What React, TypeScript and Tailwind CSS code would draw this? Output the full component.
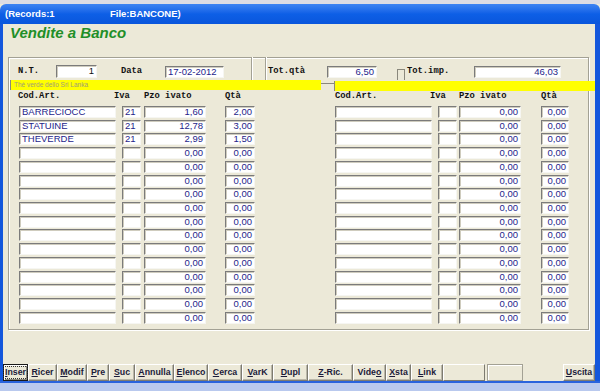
import React from 'react';

type Row = { cod: string; iva: string; pzo: string; qta: string };

const leftRows: Row[] = [
  { cod: 'BARRECIOCC', iva: '21', pzo: '1,60', qta: '2,00' },
  { cod: 'STATUINE', iva: '21', pzo: '12,78', qta: '3,00' },
  { cod: 'THEVERDE', iva: '21', pzo: '2,99', qta: '1,50' },
  ...Array.from({ length: 13 }, () => ({ cod: '', iva: '', pzo: '0,00', qta: '0,00' })),
];
const rightRows: Row[] = Array.from({ length: 16 }, () => ({ cod: '', iva: '', pzo: '0,00', qta: '0,00' }));

// sunken edit box, classic windows look
const sunken =
  'bg-white border-t border-l border-r border-b border-t-[#7b7b7b] border-l-[#7b7b7b] border-r-[#f6f6f2] border-b-[#f6f6f2] shadow-[inset_1px_1px_0_#cfccbe]';

function Field({ cls, value, right }: { cls: string; value: string; right?: boolean }) {
  return (
    <div
      className={`${sunken} ${cls} h-[12px] shrink-0 text-[9.5px] leading-[10px] text-[#24248a] font-['Liberation_Sans',Arial,sans-serif] overflow-hidden whitespace-nowrap ${
        right ? 'text-right pr-[2px]' : 'pl-[2px]'
      }`}
    >
      {value}
    </div>
  );
}

function Btn({ label, u, cls, focused }: { label: string; u: number; cls: string; focused?: boolean }) {
  return (
    <div
      className={`${cls} h-[17px] shrink-0 bg-[#ece9d8] flex items-center justify-center text-[8.8px] font-bold text-[#1b1b3a] font-['Liberation_Sans',Arial,sans-serif] ${
        focused
          ? 'border border-[#1a1a1a] shadow-[inset_1px_1px_0_#fff,inset_-1px_-1px_0_#8a887c]'
          : 'border-t border-l border-t-white border-l-white border-r border-b border-r-[#7d7b70] border-b-[#7d7b70] shadow-[inset_-1px_-1px_0_#b9b6a8]'
      }`}
    >
      <span className={focused ? 'outline outline-1 outline-dotted outline-[#333] px-[1px] leading-[11px]' : 'leading-[11px]'}>
        {label.slice(0, u)}
        <span className="underline">{label.charAt(u)}</span>
        {label.slice(u + 1)}
      </span>
    </div>
  );
}

const lbl = "h-[13px] leading-[13px] shrink-0 text-[8.8px] font-bold text-[#111] font-['Liberation_Mono',monospace]";

export default function App() {
  return (
    <div className="w-[600px] h-[391px] overflow-hidden flex flex-col bg-[#ece9d8] font-['Liberation_Sans',Arial,sans-serif]">
      <div className="h-[4px] bg-[#dcdce4]" />
      <div className="h-[20px] rounded-t-[6px] bg-gradient-to-b from-[#3d83f2] via-[#0d5fe6] to-[#0a56dc] flex items-center text-white text-[9.5px] font-bold">
        <span className="ml-[5px] w-[105px]">(Records:1</span>
        <span>File:BANCONE)</span>
      </div>

      <div className="flex h-[357px]">
        <div className="w-[3px] bg-[#1457dc]" />
        <div className="w-[592px] flex flex-col">
          <div className="h-[17px] pl-[7px] text-[15px] leading-[17px] font-bold italic text-[#1f8f28]">Vendite a Banco</div>

          {/* group box */}
          <div className="mt-[16px] ml-[5px] w-[581px] h-[273px] border border-[#a3a194] shadow-[inset_1px_1px_0_#fff,1px_1px_0_#fff] flex flex-col">
            <div className="h-[22px] flex items-end pb-[2px]">
              <div className={`${lbl} ml-[9px] w-[38px]`}>N.T.</div>
              <Field cls="w-[41px] h-[13px] !text-[#111]" value="1" right />
              <div className={`${lbl} ml-[24px] w-[44px]`}>Data</div>
              <Field cls="w-[59px]" value="17-02-2012" />
              <div className="ml-[27px] w-[2px] shrink-0 self-stretch -mt-[1px] -mb-[2px] border-l border-l-[#a3a194] border-r border-r-white" />
              <div className="ml-[12px] w-[2px] shrink-0 self-stretch -mt-[1px] -mb-[2px] border-l border-l-[#a3a194] border-r border-r-white" />
              <div className={`${lbl} ml-[1px] w-[59px]`}>Tot.qtà</div>
              <Field cls="w-[50px]" value="6,50" right />
              <div className="ml-[20px] w-[8px] h-[11px] -mb-[2px] shrink-0 border-t border-l border-r border-[#8a887c]" />
              <div className={`${lbl} ml-[2px] w-[67px]`}>Tot.imp.</div>
              <Field cls="w-[87px]" value="46,03" right />
            </div>

            <div className="h-[10px] flex">
              <div className="ml-[1px] w-[311px] h-[10px] shrink-0 bg-[#ffff00] border-l border-[#8a887c] pl-[3px] text-[6.5px] leading-[10px] text-[#a09c78]">
                Thè verde dello Sri Lanka
              </div>
              <div className="w-[13px] h-px mt-[3px] shrink-0 bg-[#8a887c]" />
              <div className="w-[262px] h-[10px] mt-[1px] bg-[#ffff00] border-l border-[#8a887c] shrink-0" />
            </div>

            <div className="h-[13px] flex items-center">
              <div className={`${lbl} ml-[9px] w-[96px]`}>Cod.Art.</div>
              <div className={`${lbl} w-[30px]`}>Iva</div>
              <div className={`${lbl} w-[81px]`}>Pzo ivato</div>
              <div className={`${lbl} w-[110px]`}>Qtà</div>
              <div className={`${lbl} w-[95px]`}>Cod.Art.</div>
              <div className={`${lbl} w-[29px]`}>Iva</div>
              <div className={`${lbl} w-[82px]`}>Pzo ivato</div>
              <div className={`${lbl} w-[30px]`}>Qtà</div>
            </div>

            <div className="mt-[3px] flex flex-col gap-[1.73px]">
              {leftRows.map((l, i) => {
                const r = rightRows[i];
                return (
                  <div key={i} className="flex h-[12px]">
                    <Field cls="ml-[10px] w-[97px]" value={l.cod} />
                    <Field cls="ml-[6px] w-[19px]" value={l.iva} />
                    <Field cls="ml-[3px] w-[62px]" value={l.pzo} right />
                    <Field cls="ml-[19px] w-[30px]" value={l.qta} right />
                    <Field cls="ml-[80px] w-[97px]" value={r.cod} />
                    <Field cls="ml-[6px] w-[19px]" value={r.iva} />
                    <Field cls="ml-[2px] w-[62px]" value={r.pzo} right />
                    <Field cls="ml-[20px] w-[28px]" value={r.qta} right />
                  </div>
                );
              })}
            </div>
          </div>

          {/* button bar */}
          <div className="mt-[34px] flex">
            <Btn label="Inser" u={0} cls="w-[25px]" focused />
            <Btn label="Ricer" u={0} cls="w-[29px]" />
            <Btn label="Modif" u={0} cls="w-[30px]" />
            <Btn label="Pre" u={0} cls="w-[22px]" />
            <Btn label="Suc" u={0} cls="w-[26px]" />
            <Btn label="Annulla" u={0} cls="w-[39px]" />
            <Btn label="Elenco" u={0} cls="w-[34px]" />
            <Btn label="Cerca" u={0} cls="w-[34px]" />
            <Btn label="VarK" u={0} cls="w-[31px]" />
            <Btn label="Dupl" u={0} cls="w-[35px]" />
            <Btn label="Z-Ric." u={0} cls="w-[45px]" />
            <Btn label="Video" u={4} cls="w-[33px]" />
            <Btn label="Xsta" u={0} cls="w-[25px]" />
            <Btn label="Link" u={0} cls="w-[32px]" />
            <div className="w-[42px] h-[17px] shrink-0 border-t border-l border-t-white border-l-white border-r border-b border-r-[#7d7b70] border-b-[#7d7b70]" />
            <div className="ml-[2px] w-[36px] h-[17px] shrink-0 border border-[#a3a194] shadow-[inset_1px_1px_0_#fff]" />
            <Btn label="Uscita" u={0} cls="ml-[40px] w-[32px]" />
          </div>
        </div>
        <div className="w-[5px] bg-[#1457dc]" />
      </div>

      <div className="h-[10px] border-t-2 border-[#2a63dc] bg-[#b9c9ee]" />
    </div>
  );
}
